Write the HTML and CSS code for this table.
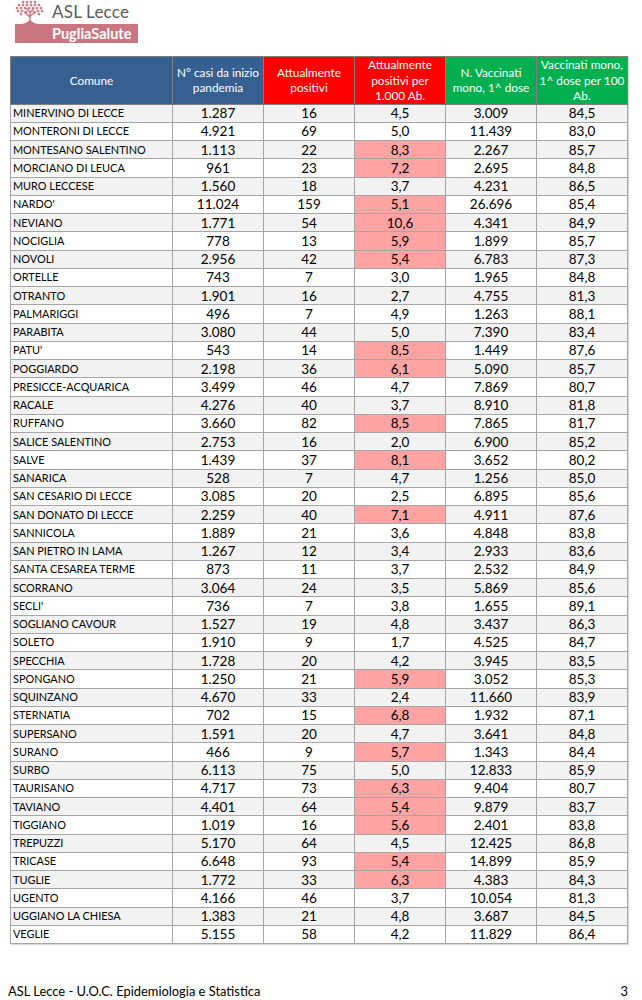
FILE: index.html
```html
<!DOCTYPE html>
<html lang="it">
<head>
<meta charset="utf-8">
<title>ASL Lecce - Comuni</title>
<link rel="stylesheet" href="styles.css">
</head>
<body>
<header class="top">
  <div class="logo">
    <div class="logo-row">
      <svg class="tree" viewBox="0 0 32 24" width="32" height="24" aria-hidden="true">
        <g fill="#c9727e">
          <path d="M15 22 L15 12 L11 8 M15 13 L19 8 M15 16 L21 12 M15 17 L9 12" stroke="#c9727e" stroke-width="1.4" fill="none"/>
          <path d="M15 20 Q12 23 7 24 L23 24 Q18 23 15 20Z"/>
          <path d="M8 0.5l1.6 1.6-1.6 1.6-1.6-1.6z"/><path d="M12 0.5l1.6 1.6-1.6 1.6-1.6-1.6z"/><path d="M16 0.5l1.6 1.6-1.6 1.6-1.6-1.6z"/><path d="M20 0.5l1.6 1.6-1.6 1.6-1.6-1.6z"/>
          <path d="M4 3.5l1.6 1.6-1.6 1.6-1.6-1.6z"/><path d="M8 3.5l1.6 1.6-1.6 1.6-1.6-1.6z"/><path d="M12 3.5l1.6 1.6-1.6 1.6-1.6-1.6z"/><path d="M16 3.5l1.6 1.6-1.6 1.6-1.6-1.6z"/><path d="M20 3.5l1.6 1.6-1.6 1.6-1.6-1.6z"/><path d="M24 3.5l1.6 1.6-1.6 1.6-1.6-1.6z"/>
          <path d="M2 6.5l1.6 1.6-1.6 1.6-1.6-1.6z"/><path d="M6 6.5l1.6 1.6-1.6 1.6-1.6-1.6z"/><path d="M10 6.5l1.6 1.6-1.6 1.6-1.6-1.6z"/><path d="M14 6.5l1.6 1.6-1.6 1.6-1.6-1.6z"/><path d="M18 6.5l1.6 1.6-1.6 1.6-1.6-1.6z"/><path d="M22 6.5l1.6 1.6-1.6 1.6-1.6-1.6z"/><path d="M26 6.5l1.6 1.6-1.6 1.6-1.6-1.6z"/>
          <path d="M3 9.5l1.6 1.6-1.6 1.6-1.6-1.6z"/><path d="M7 9.5l1.6 1.6-1.6 1.6-1.6-1.6z"/><path d="M11 10.5l1.6 1.6-1.6 1.6-1.6-1.6z"/><path d="M19 10.5l1.6 1.6-1.6 1.6-1.6-1.6z"/><path d="M23 9.5l1.6 1.6-1.6 1.6-1.6-1.6z"/><path d="M27 9.5l1.6 1.6-1.6 1.6-1.6-1.6z"/>
          <path d="M6 12.5l1.6 1.6-1.6 1.6-1.6-1.6z"/><path d="M24 12.5l1.6 1.6-1.6 1.6-1.6-1.6z"/>
        </g>
      </svg>
      <span class="asl">ASL Lecce</span>
    </div>
    <div class="bar">PugliaSalute</div>
  </div>
</header>

<table class="data">
  <colgroup>
    <col class="c-name"><col class="c-num"><col class="c-num"><col class="c-num"><col class="c-num"><col class="c-num">
  </colgroup>
  <thead>
    <tr>
      <th class="h-blue">Comune</th>
      <th class="h-blue">N° casi da inizio pandemia</th>
      <th class="h-red">Attualmente positivi</th>
      <th class="h-red">Attualmente positivi per 1.000 Ab.</th>
      <th class="h-green">N. Vaccinati mono, 1^ dose</th>
      <th class="h-green">Vaccinati mono, 1^ dose per 100 Ab.</th>
    </tr>
  </thead>
  <tbody>
    <tr><td>MINERVINO DI LECCE</td><td>1.287</td><td>16</td><td>4,5</td><td>3.009</td><td>84,5</td></tr>
    <tr><td>MONTERONI DI LECCE</td><td>4.921</td><td>69</td><td>5,0</td><td>11.439</td><td>83,0</td></tr>
    <tr><td>MONTESANO SALENTINO</td><td>1.113</td><td>22</td><td class="hi">8,3</td><td>2.267</td><td>85,7</td></tr>
    <tr><td>MORCIANO DI LEUCA</td><td>961</td><td>23</td><td class="hi">7,2</td><td>2.695</td><td>84,8</td></tr>
    <tr><td>MURO LECCESE</td><td>1.560</td><td>18</td><td>3,7</td><td>4.231</td><td>86,5</td></tr>
    <tr><td>NARDO'</td><td>11.024</td><td>159</td><td class="hi">5,1</td><td>26.696</td><td>85,4</td></tr>
    <tr><td>NEVIANO</td><td>1.771</td><td>54</td><td class="hi">10,6</td><td>4.341</td><td>84,9</td></tr>
    <tr><td>NOCIGLIA</td><td>778</td><td>13</td><td class="hi">5,9</td><td>1.899</td><td>85,7</td></tr>
    <tr><td>NOVOLI</td><td>2.956</td><td>42</td><td class="hi">5,4</td><td>6.783</td><td>87,3</td></tr>
    <tr><td>ORTELLE</td><td>743</td><td>7</td><td>3,0</td><td>1.965</td><td>84,8</td></tr>
    <tr><td>OTRANTO</td><td>1.901</td><td>16</td><td>2,7</td><td>4.755</td><td>81,3</td></tr>
    <tr><td>PALMARIGGI</td><td>496</td><td>7</td><td>4,9</td><td>1.263</td><td>88,1</td></tr>
    <tr><td>PARABITA</td><td>3.080</td><td>44</td><td>5,0</td><td>7.390</td><td>83,4</td></tr>
    <tr><td>PATU'</td><td>543</td><td>14</td><td class="hi">8,5</td><td>1.449</td><td>87,6</td></tr>
    <tr><td>POGGIARDO</td><td>2.198</td><td>36</td><td class="hi">6,1</td><td>5.090</td><td>85,7</td></tr>
    <tr><td>PRESICCE-ACQUARICA</td><td>3.499</td><td>46</td><td>4,7</td><td>7.869</td><td>80,7</td></tr>
    <tr><td>RACALE</td><td>4.276</td><td>40</td><td>3,7</td><td>8.910</td><td>81,8</td></tr>
    <tr><td>RUFFANO</td><td>3.660</td><td>82</td><td class="hi">8,5</td><td>7.865</td><td>81,7</td></tr>
    <tr><td>SALICE SALENTINO</td><td>2.753</td><td>16</td><td>2,0</td><td>6.900</td><td>85,2</td></tr>
    <tr><td>SALVE</td><td>1.439</td><td>37</td><td class="hi">8,1</td><td>3.652</td><td>80,2</td></tr>
    <tr><td>SANARICA</td><td>528</td><td>7</td><td>4,7</td><td>1.256</td><td>85,0</td></tr>
    <tr><td>SAN CESARIO DI LECCE</td><td>3.085</td><td>20</td><td>2,5</td><td>6.895</td><td>85,6</td></tr>
    <tr><td>SAN DONATO DI LECCE</td><td>2.259</td><td>40</td><td class="hi">7,1</td><td>4.911</td><td>87,6</td></tr>
    <tr><td>SANNICOLA</td><td>1.889</td><td>21</td><td>3,6</td><td>4.848</td><td>83,8</td></tr>
    <tr><td>SAN PIETRO IN LAMA</td><td>1.267</td><td>12</td><td>3,4</td><td>2.933</td><td>83,6</td></tr>
    <tr><td>SANTA CESAREA TERME</td><td>873</td><td>11</td><td>3,7</td><td>2.532</td><td>84,9</td></tr>
    <tr><td>SCORRANO</td><td>3.064</td><td>24</td><td>3,5</td><td>5.869</td><td>85,6</td></tr>
    <tr><td>SECLI'</td><td>736</td><td>7</td><td>3,8</td><td>1.655</td><td>89,1</td></tr>
    <tr><td>SOGLIANO CAVOUR</td><td>1.527</td><td>19</td><td>4,8</td><td>3.437</td><td>86,3</td></tr>
    <tr><td>SOLETO</td><td>1.910</td><td>9</td><td>1,7</td><td>4.525</td><td>84,7</td></tr>
    <tr><td>SPECCHIA</td><td>1.728</td><td>20</td><td>4,2</td><td>3.945</td><td>83,5</td></tr>
    <tr><td>SPONGANO</td><td>1.250</td><td>21</td><td class="hi">5,9</td><td>3.052</td><td>85,3</td></tr>
    <tr><td>SQUINZANO</td><td>4.670</td><td>33</td><td>2,4</td><td>11.660</td><td>83,9</td></tr>
    <tr><td>STERNATIA</td><td>702</td><td>15</td><td class="hi">6,8</td><td>1.932</td><td>87,1</td></tr>
    <tr><td>SUPERSANO</td><td>1.591</td><td>20</td><td>4,7</td><td>3.641</td><td>84,8</td></tr>
    <tr><td>SURANO</td><td>466</td><td>9</td><td class="hi">5,7</td><td>1.343</td><td>84,4</td></tr>
    <tr><td>SURBO</td><td>6.113</td><td>75</td><td>5,0</td><td>12.833</td><td>85,9</td></tr>
    <tr><td>TAURISANO</td><td>4.717</td><td>73</td><td class="hi">6,3</td><td>9.404</td><td>80,7</td></tr>
    <tr><td>TAVIANO</td><td>4.401</td><td>64</td><td class="hi">5,4</td><td>9.879</td><td>83,7</td></tr>
    <tr><td>TIGGIANO</td><td>1.019</td><td>16</td><td class="hi">5,6</td><td>2.401</td><td>83,8</td></tr>
    <tr><td>TREPUZZI</td><td>5.170</td><td>64</td><td>4,5</td><td>12.425</td><td>86,8</td></tr>
    <tr><td>TRICASE</td><td>6.648</td><td>93</td><td class="hi">5,4</td><td>14.899</td><td>85,9</td></tr>
    <tr><td>TUGLIE</td><td>1.772</td><td>33</td><td class="hi">6,3</td><td>4.383</td><td>84,3</td></tr>
    <tr><td>UGENTO</td><td>4.166</td><td>46</td><td>3,7</td><td>10.054</td><td>81,3</td></tr>
    <tr><td>UGGIANO LA CHIESA</td><td>1.383</td><td>21</td><td>4,8</td><td>3.687</td><td>84,5</td></tr>
    <tr><td>VEGLIE</td><td>5.155</td><td>58</td><td>4,2</td><td>11.829</td><td>86,4</td></tr>
  </tbody>
</table>

<footer class="foot">
  <span>ASL Lecce - U.O.C. Epidemiologia e Statistica</span>
  <span>3</span>
</footer>
</body>
</html>
```

FILE: styles.css
```css
html, body {
  margin: 0;
  padding: 0;
  background: #ffffff;
}
body {
  width: 642px;
  font-family: Lato, "Open Sans", "Liberation Sans", sans-serif;
  color: #000;
}

.top {
  height: 56px;
  padding-left: 15px;
  box-sizing: border-box;
}
.logo {
  display: inline-flex;
  flex-direction: column;
}
.logo-row {
  display: flex;
  align-items: flex-end;
  height: 24px;
}
.tree {
  display: block;
}
.asl {
  margin-left: 5px;
  margin-bottom: 3px;
  font-size: 17px;
  line-height: 18px;
  color: #5b5b5b;
  letter-spacing: 0.2px;
}
.bar {
  width: 123px;
  height: 19px;
  box-sizing: border-box;
  padding-left: 37px;
  background: #c97681;
  color: #fff;
  font-weight: bold;
  font-size: 14.5px;
  line-height: 19px;
}

.data {
  margin-left: 10px;
  width: 617px;
  table-layout: fixed;
  border-collapse: collapse;
  box-shadow: 1px 1px 1px rgba(0,0,0,0.15);
}
.c-name { width: 162px; }
.c-num { width: 91px; }

.data th {
  height: 46px;
  padding: 0 2px;
  box-sizing: border-box;
  color: #fff;
  font-weight: normal;
  font-size: 11.8px;
  line-height: 15.5px;
  text-align: center;
  vertical-align: middle;
  border: 1px solid #7f7f7f;
}
.h-blue { background: #376092; }
.h-red { background: #ff0000; }
.h-green { background: #00b050; }

.data td {
  height: 18.26px;
  padding: 0;
  box-sizing: border-box;
  border: 1px solid #a6a6a6;
  text-align: center;
  font-size: 13.5px;
  line-height: 16px;
  white-space: nowrap;
}
.data td:first-child {
  text-align: left;
  padding-left: 2px;
  font-size: 10.9px;
}
.data tbody tr:nth-child(odd) td {
  background: #f2f2f2;
}
.data tbody tr td.hi {
  background: #ffa3a3;
}

.foot {
  display: flex;
  justify-content: space-between;
  margin-top: 38px;
  padding: 0 14px 0 8px;
  font-size: 12.9px;
  line-height: 18px;
}
```
